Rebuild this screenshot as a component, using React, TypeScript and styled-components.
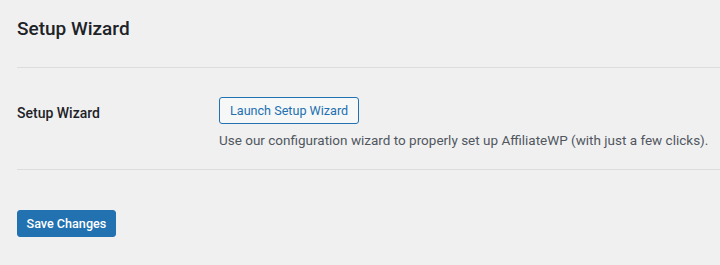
import React from "react";
import styled, { createGlobalStyle } from "styled-components";

const GlobalStyle = createGlobalStyle`
  html, body {
    margin: 0;
    padding: 0;
    background: #f0f0f1;
  }
  body {
    font-family: Roboto, "Liberation Sans", Arial, sans-serif;
    color: #1d2327;
  }
`;

const Wrapper = styled.div`
  display: flex;
  flex-direction: column;
  padding: 16px 0 0 17px;
  height: 265px;
  box-sizing: border-box;
`;

const Title = styled.h2`
  margin: 0 0 25px;
  font-size: 19px;
  line-height: 26px;
  font-weight: 500;
  color: #1d2327;
`;

const Divider = styled.hr`
  margin: 0;
  border: 0;
  border-top: 1px solid #dcdcde;
  height: 0;
`;

const Row = styled.div`
  display: grid;
  grid-template-columns: 202px 1fr;
  padding: 29px 0 19px;
`;

const Label = styled.div`
  padding-top: 6px;
  font-size: 14px;
  line-height: 20px;
  font-weight: 500;
  color: #1d2327;
`;

const Field = styled.div`
  display: flex;
  flex-direction: column;
  align-items: flex-start;
  gap: 6px;
`;

const Button = styled.button<{ $primary?: boolean }>`
  font-family: inherit;
  font-size: 12.6px;
  font-weight: ${(p) => (p.$primary ? 500 : 400)};
  line-height: 25px;
  height: 27px;
  padding: ${(p) => (p.$primary ? "0 8.5px" : "0 10px")};
  border-radius: 3px;
  border: 1px solid #2271b1;
  background: ${(p) => (p.$primary ? "#2271b1" : "#f6f7f7")};
  color: ${(p) => (p.$primary ? "#fff" : "#2271b1")};
  cursor: pointer;
  box-sizing: border-box;
`;

const Description = styled.p`
  margin: 0;
  font-size: 13.5px;
  line-height: 20px;
  white-space: nowrap;
  color: #50575e;
`;

const Submit = styled.div`
  padding-top: 40px;
`;

export default function App() {
  return (
    <>
      <GlobalStyle />
      <Wrapper>
        <Title>Setup Wizard</Title>
        <Divider />
        <Row>
          <Label>Setup Wizard</Label>
          <Field>
            <Button>Launch Setup Wizard</Button>
            <Description>
              Use our configuration wizard to properly set up AffiliateWP (with
              just a few clicks).
            </Description>
          </Field>
        </Row>
        <Divider />
        <Submit>
          <Button $primary>Save Changes</Button>
        </Submit>
      </Wrapper>
    </>
  );
}
